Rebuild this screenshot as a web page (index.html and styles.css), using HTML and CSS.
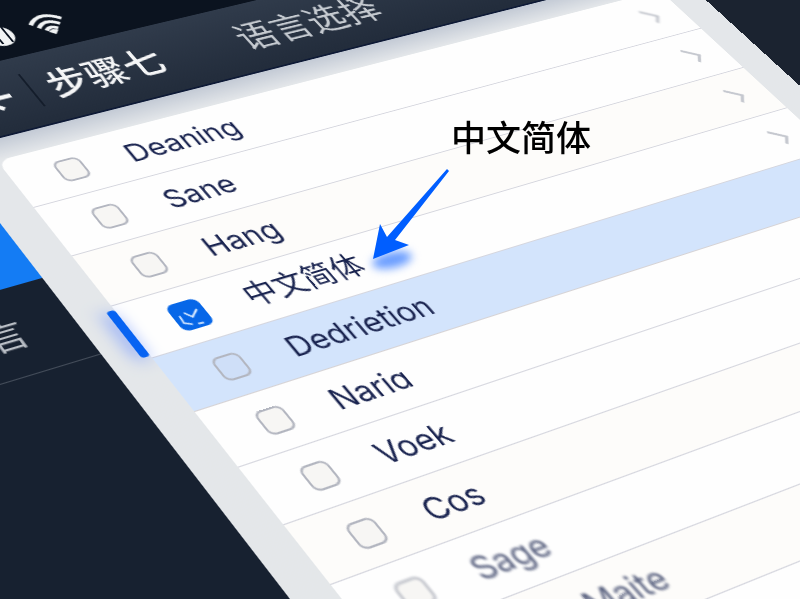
FILE: index.html
```html
<!DOCTYPE html>
<html lang="zh-CN">
<head>
    <meta charset="UTF-8">
    <meta name="viewport" content="width=device-width, initial-scale=1.0">
    <title>语言选择</title>
    <link rel="stylesheet" href="styles.css">
</head>
<body>
    <div class="device">
        <div class="status-bar">
            <svg class="status-icon" viewBox="0 0 36 30">
                <circle cx="16" cy="16" r="13" fill="#f2f4f5"/>
                <path d="M8 8v16M13 12v14M23 4v22" stroke="#0d1522" stroke-width="2"/>
            </svg>
            <svg class="status-icon" viewBox="0 0 36 30">
                <g fill="none" stroke="#f2f4f5" stroke-width="4">
                    <path d="M2 11Q18 -5 34 11"/>
                    <path d="M7 17Q18 6 29 17"/>
                    <path d="M12 22Q18 16 24 22"/>
                </g>
                <path d="M18 29l-5-5q5-4 10 0z" fill="#f2f4f5"/>
            </svg>
        </div>
        <header class="header">
            <button class="back-button" aria-label="返回">
                <svg viewBox="0 0 36 36" fill="none" stroke="#f5f6f7" stroke-width="5">
                    <path d="M4 18h30M20 4L6 18l14 14"/>
                </svg>
            </button>
            <span class="step">步骤七</span>
            <h1>语言选择</h1>
        </header>
        <div class="body">
            <nav class="sidebar">
                <a class="active" href="#"></a>
                <a href="#">语言</a>
            </nav>
            <main class="panel">
                <ul class="list">
                    <li><label><input type="checkbox"><span>Deaning</span></label>
                        <svg class="chevron soft" viewBox="0 0 18 24"><path d="M2 2l14 11-7 8"/></svg></li>
                    <li><label><input type="checkbox"><span>Sane</span></label>
                        <svg class="chevron" viewBox="0 0 18 24"><path d="M2 2l14 11-7 8"/></svg></li>
                    <li class="warm"><label><input type="checkbox"><span>Hang</span></label>
                        <svg class="chevron" viewBox="0 0 18 24"><path d="M2 2l14 11-7 8"/></svg></li>
                    <li class="selected"><label><input type="checkbox" checked><span>中文简体</span></label>
                        <svg class="check" viewBox="0 0 34 34" fill="none" stroke="#d9eaff" stroke-width="2">
                            <path d="M13 13l5 7 9-7M7 15l-1 9 7 4M18 29l6 1"/>
                        </svg>
                        <svg class="chevron" viewBox="0 0 18 24"><path d="M2 2l14 11-7 8"/></svg></li>
                    <li class="highlight"><label><input type="checkbox"><span>Dedrietion</span></label></li>
                    <li><label><input type="checkbox"><span>Nariɑ</span></label></li>
                    <li><label><input type="checkbox"><span>Voek</span></label></li>
                    <li class="warm"><label><input type="checkbox"><span>Cos</span></label></li>
                    <li class="far"><label><input type="checkbox"><span>Sage</span></label></li>
                    <li class="far warm indent"><label><input type="checkbox"><span>Maite</span></label></li>
                </ul>
            </main>
        </div>
    </div>

    <!-- callout -->
    <div class="callout">中文简体</div>
    <svg class="arrow" viewBox="0 0 100 120">
        <ellipse class="glow" cx="32" cy="100" rx="20" ry="8" transform="rotate(-12 32 100)"/>
        <path d="M87 9L89 11L35 80L49 85L13 99L20 64L27 77Z" fill="#005eff"/>
    </svg>
</body>
</html>
```
FILE: styles.css
```css
* {
    box-sizing: border-box;
}
body {
    margin: 0;
    height: 100vh;
    overflow: hidden;
    position: relative;
    background-color: #1b2330;
    font-family: Inter, "Noto Sans CJK SC", sans-serif;
    color: #1a2450;
}
/* the whole tablet lies on a tilted plane */
.device {
    position: absolute;
    top: 0;
    left: 0;
    width: 139vw;
    transform-origin: 0 0;
    transform: matrix3d(1.05203, -0.23608, 0, 0.00021473,
                        0.61655, 0.73857, 0, -0.00027286,
                        0, 0, 1, 0,
                        -474.85, 101, 0, 0.99661);
}
.status-bar {
    display: flex;
    align-items: center;
    gap: 12px;
    height: 80px;
    padding: 20px 0 0 406px;
    background-color: #0b131f;
}
.status-icon {
    width: 36px;
    height: 30px;
}
.header {
    display: grid;
    grid-template-columns: 70px auto 1fr;
    align-items: center;
    height: 88px;
    padding-left: 342px;
    position: relative;
    background: linear-gradient(#303b4b, #222c3b);
    border-bottom: 2px solid #0e1a36;
}
.back-button {
    display: flex;
    align-items: center;
    justify-content: flex-end;
    height: 44px;
    padding: 0 18px 0 0;
    background: none;
    border: none;
    border-right: 2px solid #141d2b;
}
.back-button svg {
    width: 36px;
    height: 36px;
}
.step {
    margin-left: 16px;
    font-size: 39px;
    line-height: 56px;
    font-weight: 500;
    color: #f4f5f6;
}
h1 {
    position: absolute;
    left: 336px;
    right: 36px;
    margin: 0;
    text-align: center;
    font-size: 39px;
    line-height: 56px;
    font-weight: 400;
    color: #c6cbd1;
}
.body {
    display: grid;
    grid-template-columns: 300px 1fr;
}
.sidebar {
    padding-top: 68px;
    background-color: #172130;
}
.sidebar a {
    display: flex;
    align-items: center;
    justify-content: flex-end;
    height: 89px;
    padding-right: 44px;
    border-bottom: 1px solid #444d5a;
    font-size: 34px;
    color: #b9bec5;
    text-decoration: none;
}
.sidebar a.active {
    background-color: #147cf4;
    border-bottom: none;
}
.panel {
    padding: 24px 36px;
    background: linear-gradient(#c3cad5, #e4e7ea 24px, #e4e7e9);
}
.list {
    margin: 0;
    padding: 0 0 120px;
    list-style: none;
    background-color: #fefefe;
    border-radius: 12px 12px 0 0;
}
.list li {
    display: flex;
    align-items: center;
    justify-content: space-between;
    height: 60px;
    padding: 0 28px 0 42px;
    position: relative;
    border-bottom: 1px solid #d5d6de;
}
.list label {
    display: flex;
    align-items: center;
    gap: 42px;
    font-size: 29px;
    line-height: 40px;
}
.list input {
    appearance: none;
    width: 26px;
    height: 26px;
    margin: 0;
    background-color: #f7f6f4;
    border: 2px solid #b3b6c0;
    border-radius: 7px;
}
.list .warm {
    background-color: #fdfcfa;
}
.list .highlight {
    background-color: #d3e4fc;
    border-bottom-color: #d6d3d5;
}
.list .highlight input {
    background-color: #cfdff8;
}
.list .selected input {
    width: 30px;
    height: 30px;
    margin: 0 -2px;
    background-color: #0767e8;
    border-color: #0767e8;
}
.list .selected::before {
    content: "";
    position: absolute;
    left: -8px;
    top: 4px;
    bottom: 2px;
    width: 8px;
    background-color: #0763f2;
    border-radius: 3px;
    box-shadow: -4px 2px 16px #6e93ff;
}
.check {
    position: absolute;
    left: 40px;
    width: 30px;
    height: 30px;
    pointer-events: none;
}
.chevron {
    width: 18px;
    height: 24px;
    fill: none;
    stroke: #c5c8cf;
    stroke-width: 3;
}
.soft {
    filter: blur(1px);
}
.far label {
    color: #59617f;
    filter: blur(1px);
}
.indent label {
    padding-left: 60px;
}
.callout {
    position: absolute;
    left: 451px;
    top: 113px;
    font-size: 35px;
    line-height: 50px;
    font-weight: 500;
    color: #000;
}
.arrow {
    position: absolute;
    left: 360px;
    top: 160px;
    width: 100px;
    height: 120px;
}
.glow {
    fill: #6a9dff;
    filter: blur(4px);
}
```
